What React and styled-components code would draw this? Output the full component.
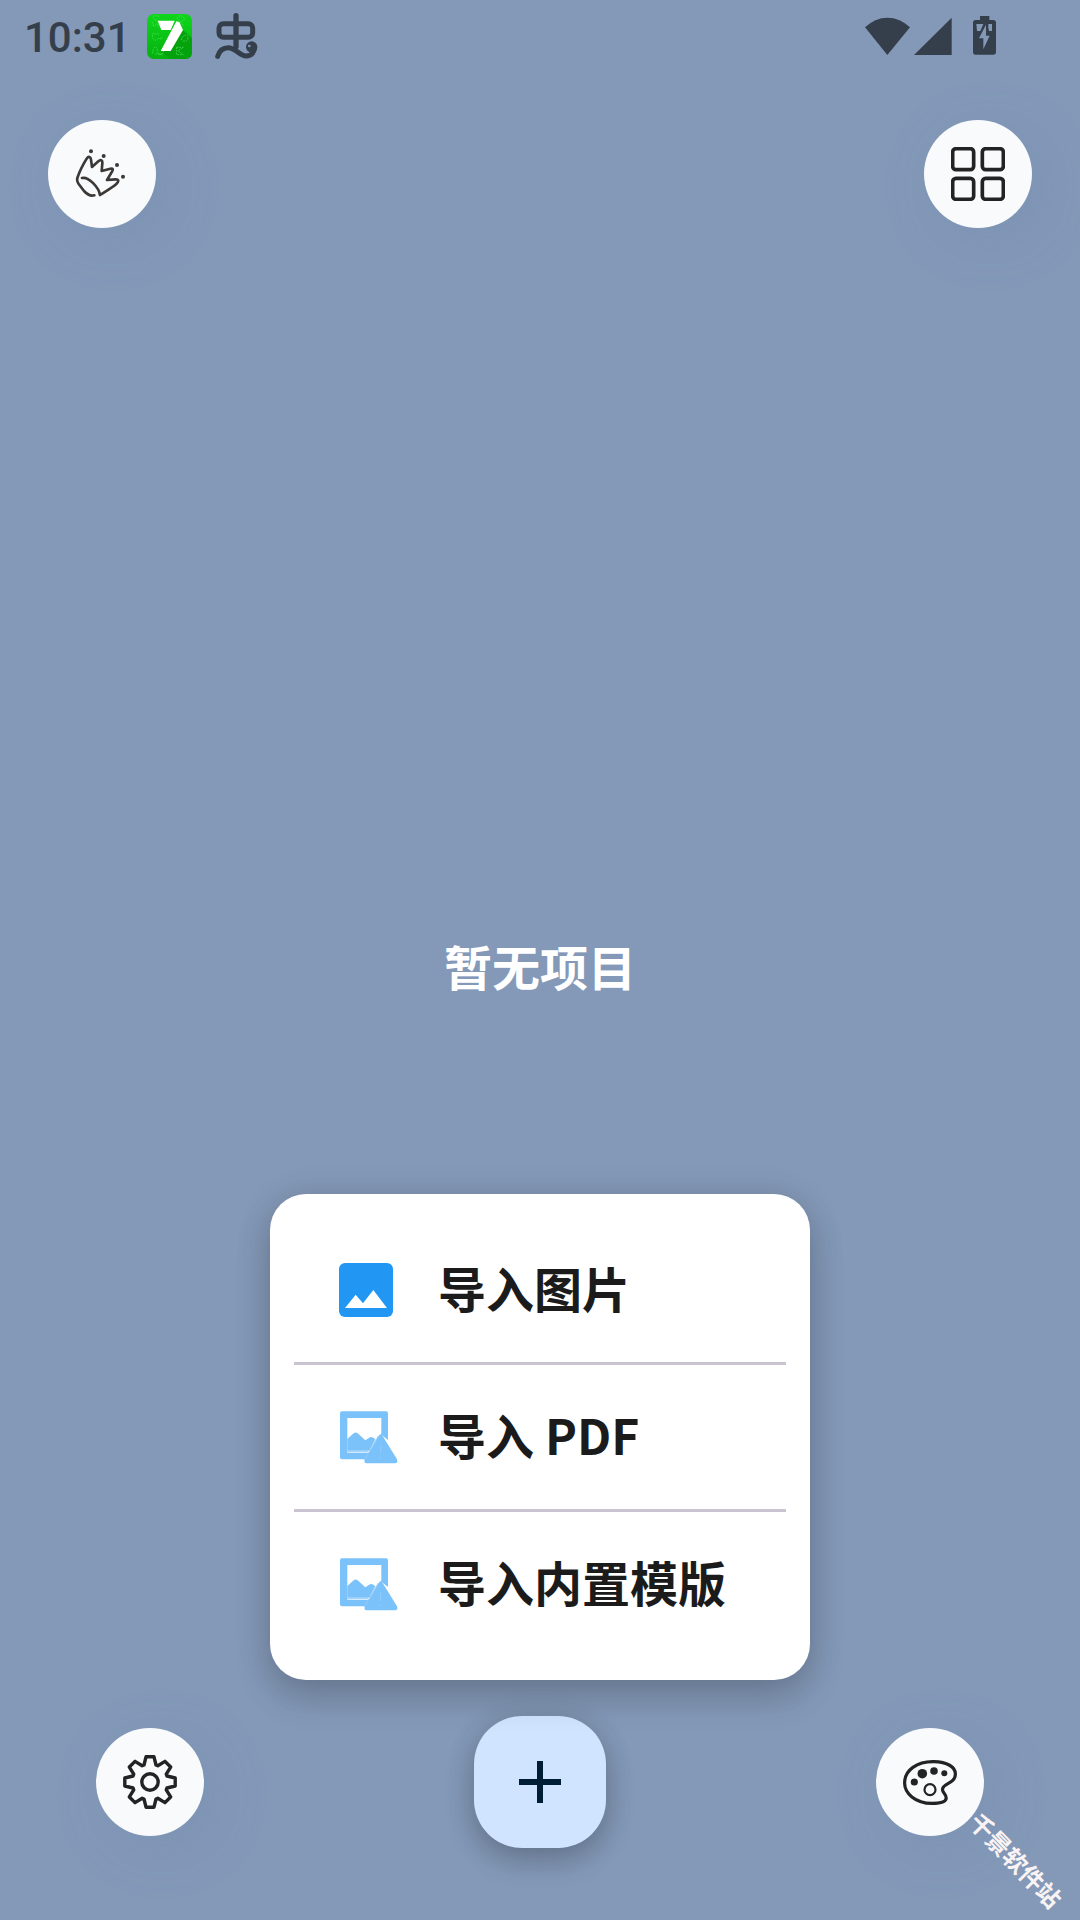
/* ------------------------- External Dependencies -------------------------- */
import React from 'react'
import styled, { createGlobalStyle } from 'styled-components'

const GlobalStyle = createGlobalStyle`
  * {
    box-sizing: border-box;
  }

  body {
    margin: 0;
    background: #8499b8;
    font-family: "Noto Sans CJK SC", sans-serif;
  }

  button {
    padding: 0;
    border: 0;
    font: inherit;
    cursor: pointer;
  }

  svg {
    display: block;
  }
`

/* --------------------------- Styled Components ---------------------------- */
const Page = styled.div`
  position: relative;
  display: flex;
  flex-direction: column;
  min-height: 100vh;
  overflow: hidden;
`

const StatusBar = styled.div`
  display: flex;
  align-items: center;
  justify-content: space-between;
  height: 72px;
  padding: 0 84px 0 24px;
  color: #353f4c;
`

const StatusGroup = styled.div`
  display: flex;
  align-items: center;
  gap: ${props => props.$gap}px;
`

const Clock = styled.time`
  padding-top: 4px;
  font-family: Roboto, sans-serif;
  font-size: 42px;
  font-weight: 500;
  line-height: 48px;
`

const TopBar = styled.header`
  display: flex;
  justify-content: space-between;
  padding: 48px 48px 12px;
`

const Content = styled.main`
  display: flex;
  flex: 1;
  align-items: center;
  justify-content: center;
`

const Label = styled.span`
  padding-bottom: 6px;
  font-size: 48px;
  font-weight: 700;
  line-height: 72px;
  white-space: nowrap;
`

const EmptyText = styled(Label)`
  color: #fff;
`

const BottomBar = styled.footer`
  display: flex;
  align-items: center;
  justify-content: space-between;
  padding: 20px 96px 72px;
`

const RoundButton = styled.button`
  display: flex;
  align-items: center;
  justify-content: center;
  width: 108px;
  height: 108px;
  border-radius: 50%;
  background: #f8fafc;
  box-shadow: 12px 12px 60px rgba(80, 115, 155, 0.16);
`

const AddAnchor = styled.div`
  position: relative;
`

const AddButton = styled.button`
  display: flex;
  align-items: center;
  justify-content: center;
  width: 132px;
  height: 132px;
  border-radius: 48px;
  background: #d0e4ff;
  box-shadow: 0 12px 30px rgba(0, 0, 0, 0.2), 0 3px 30px rgba(0, 0, 0, 0.1);
`

const Menu = styled.div`
  position: absolute;
  bottom: calc(100% + 36px);
  left: 50%;
  width: 540px;
  margin-left: -270px;
  padding: 24px;
  border-radius: 36px;
  background: #fff;
  box-shadow: 0 18px 36px rgba(0, 0, 0, 0.16), 0 3px 36px rgba(0, 0, 0, 0.12);
`

const MenuItem = styled.button`
  display: flex;
  align-items: center;
  gap: 36px;
  width: 100%;
  height: 144px;
  padding: 0 36px;
  background: none;
  color: #1c1b1b;
`

const Divider = styled.hr`
  height: 3px;
  margin: 0;
  border: 0;
  background: #cac4d2;
`

const Watermark = styled.span`
  position: absolute;
  right: 4px;
  bottom: 48px;
  color: #faf3f3;
  font-size: 24px;
  font-weight: 700;
  line-height: 24px;
  white-space: nowrap;
  transform: rotate(46deg);
  pointer-events: none;
`

/* --------------------------------- Icons ---------------------------------- */
const SevenIcon = () => (
  <svg width="45" height="45" viewBox="441 42 135 135" aria-hidden="true">
    <defs>
      <linearGradient id="seven" x1="0" y1="0" x2="0" y2="1">
        <stop offset="0" stopColor="#0fd61c" />
        <stop offset="1" stopColor="#05b10e" />
      </linearGradient>
    </defs>
    <rect x="441" y="42" width="135" height="135" rx="20" fill="url(#seven)" />
    <path d="M549 90L576 115V157Q576 177 556 177H510L482 153Z" fill="#04a30d" />
    <g fill="none" stroke="#5be463" strokeWidth="2" strokeDasharray="5 3">
      <path d="M458 52l10-6 12 4M456 66l6 14 10-10 4 12M462 58l10 4" />
      <path d="M530 54l12-8 13 10-12 10zM541 68l12 10" />
      <path d="M460 98c-8 16 4 28 12 20s12 6 14-6M464 102h16" />
      <path d="M544 120c4-16 20-20 20-8s-10 14-18 10" />
      <path d="M458 160c0-24 14-24 14-8s18 16 18-2M466 162h22" />
      <path d="M530 142h20l-16 10 16 12h-20z" />
    </g>
    <path d="M473 62H524L512 90H484ZM529 64L538 66L549 90L512 153H482L512 96Z" fill="#fff" />
  </svg>
)

const WormIcon = () => (
  <svg width="43" height="46" viewBox="644 41 129 138" fill="none" stroke="currentColor" aria-hidden="true">
    <rect x="656" y="73" width="101" height="41" rx="13" strokeWidth="15" />
    <path d="M707 49V142" strokeWidth="16" strokeLinecap="round" />
    <path d="M652 171C657 154 668 145 684 145C706 145 716 170 738 170C754 169 763 158 763 143" strokeWidth="15" strokeLinecap="round" />
    <circle cx="754" cy="143" r="17" fill="currentColor" stroke="none" />
    <circle cx="747" cy="140" r="4" fill="#8499b8" stroke="none" />
  </svg>
)

const WifiIcon = () => (
  <svg width="45" height="39" viewBox="75 48 135 117" fill="currentColor" aria-hidden="true">
    <path d="M75 79Q105 50 142 50Q180 50 210 79L142 162Z" />
  </svg>
)

const SignalIcon = () => (
  <svg width="38" height="39" viewBox="222 48 114 117" fill="currentColor" aria-hidden="true">
    <path d="M222 162L335 50V162Z" />
  </svg>
)

const BatteryIcon = () => (
  <svg width="23" height="41" viewBox="399 45 69 123" aria-hidden="true">
    <path d="M420 45H448V57H460Q468 57 468 65V153Q468 161 460 161H407Q399 161 399 153V65Q399 57 407 57H420Z" fill="currentColor" />
    <path d="M409 69H430L421 90H411ZM445 69V80L447 90H456V69Z" fill="#8499b8" />
    <path d="M438 71L417 112H430V145L449 104H438Z" fill="#8499b8" />
  </svg>
)

const HandIcon = () => (
  <svg width="54" height="54" viewBox="135 141 162 162" fill="none" stroke="#3b3836" strokeWidth="8" strokeLinecap="round" strokeLinejoin="round" aria-hidden="true">
    <path d="M193 286C182 289 172 284 162 273L146 252C140 244 140 239 143 231C150 211 159 194 170 176C176 167 182 171 183 179L186 201L205 184C213 177 218 181 217 190L215 213L241 206C249 204 250 208 246 215L231 240L257 238C267 238 267 244 259 252C248 262 227 274 210 285C207 263 176 229 156 234" />
    <g fill="#3b3836" stroke="none">
      <circle cx="183" cy="154" r="6" />
      <circle cx="221" cy="168" r="6" />
      <circle cx="261" cy="195" r="6" />
      <circle cx="279" cy="230" r="6" />
    </g>
  </svg>
)

const GridIcon = () => (
  <svg width="54" height="54" viewBox="153 141 162 162" fill="none" stroke="#232323" strokeWidth="11" aria-hidden="true">
    <rect x="158" y="146" width="63" height="63" rx="10" />
    <rect x="247" y="146" width="63" height="63" rx="10" />
    <rect x="158" y="235" width="63" height="63" rx="10" />
    <rect x="247" y="235" width="63" height="63" rx="10" />
  </svg>
)

// one tooth of the cog, turned eight times round the centre
const tooth = [[-6, -17], [-4, -25.2], [4, -25.2], [6, -17]]
const cog = [0, 1, 2, 3, 4, 5, 6, 7].flatMap(n => {
  const a = n * Math.PI / 4
  return tooth.map(([x, y]) => [
    (x * Math.cos(a) - y * Math.sin(a)).toFixed(2),
    (x * Math.sin(a) + y * Math.cos(a)).toFixed(2)
  ].join(','))
}).join(' ')

const CogIcon = () => (
  <svg width="54" height="54" viewBox="-27 -27 54 54" fill="none" stroke="#232323" strokeWidth="3.4" strokeLinejoin="round" aria-hidden="true">
    <polygon points={cog} />
    <circle r="8.2" />
  </svg>
)

const PaletteIcon = () => (
  <svg width="54" height="45" viewBox="0 0 54 45" fill="#232323" aria-hidden="true">
    <path d="M31 1.6C44 1.8 52.4 7 52.4 14C52.4 24 39.5 23 39.5 29.5C39.5 33 43.2 33.5 43.2 38C43.2 42 38 43.4 29 43.4C12 43.4 1.6 33 1.6 23C1.6 10 14 1.4 31 1.6Z" fill="none" stroke="#232323" strokeWidth="3.2" />
    <circle cx="11.3" cy="22" r="3.6" />
    <circle cx="19.3" cy="13.7" r="4.8" />
    <circle cx="31" cy="11" r="3.8" />
    <circle cx="41.3" cy="13.3" r="3" />
    <circle cx="27" cy="29.7" r="5.5" fill="none" stroke="#232323" strokeWidth="2.2" />
  </svg>
)

const PlusIcon = () => (
  <svg width="42" height="42" viewBox="0 0 14 14" fill="#001d36" aria-hidden="true">
    <path d="M6 0H8V6H14V8H8V14H6V8H0V6H6Z" />
  </svg>
)

const ImageIcon = () => (
  <svg width="72" height="72" viewBox="210 222 216 216" aria-hidden="true">
    <rect x="237" y="249" width="162" height="162" rx="18" fill="#2196f3" />
    <path d="M255 384L287 344L309 370L340 330L381 384Z" fill="#fff" />
  </svg>
)

const MissingImageIcon = () => (
  <svg width="72" height="72" viewBox="210 63 216 216" fill="#7bc1fa" aria-hidden="true">
    <path d="M246 94H378Q384 94 384 100V180L362 163L322 238H246Q240 238 240 232V100Q240 94 246 94ZM262 114V218H330L364 160V114Z" fillRule="evenodd" />
    <path d="M262 177L281 160Q287 155 293 160L316 181L330 172Q336 169 346 178L328 212H262Z" />
    <path d="M356 168Q362 158 368 168L411 238Q415 250 405 250H320Q310 250 315 238Z" />
    <path d="M313 240L355 168M262 215H324M362 196V220M362 231V237" fill="none" stroke="#93ccfb" strokeWidth="3" />
  </svg>
)

/* ---------------------------------- App ----------------------------------- */
const App = () => (
  <Page>
    <GlobalStyle />
    <StatusBar>
      <StatusGroup $gap={16}>
        <Clock>10:31</Clock>
        <StatusGroup $gap={23}>
          <SevenIcon />
          <WormIcon />
        </StatusGroup>
      </StatusGroup>
      <StatusGroup $gap={21}>
        <StatusGroup $gap={4}>
          <WifiIcon />
          <SignalIcon />
        </StatusGroup>
        <BatteryIcon />
      </StatusGroup>
    </StatusBar>

    <TopBar>
      <RoundButton type="button" aria-label="手势"><HandIcon /></RoundButton>
      <RoundButton type="button" aria-label="分类"><GridIcon /></RoundButton>
    </TopBar>

    <Content>
      <EmptyText as="p">暂无项目</EmptyText>
    </Content>

    <BottomBar>
      <RoundButton type="button" aria-label="设置"><CogIcon /></RoundButton>
      <AddAnchor>
        <AddButton type="button" aria-label="新建"><PlusIcon /></AddButton>
        <Menu>
          <MenuItem type="button"><ImageIcon /><Label>导入图片</Label></MenuItem>
          <Divider />
          <MenuItem type="button"><MissingImageIcon /><Label>导入 PDF</Label></MenuItem>
          <Divider />
          <MenuItem type="button"><MissingImageIcon /><Label>导入内置模版</Label></MenuItem>
        </Menu>
      </AddAnchor>
      <RoundButton type="button" aria-label="主题"><PaletteIcon /></RoundButton>
    </BottomBar>

    <Watermark>千景软件站</Watermark>
  </Page>
)

export default App
